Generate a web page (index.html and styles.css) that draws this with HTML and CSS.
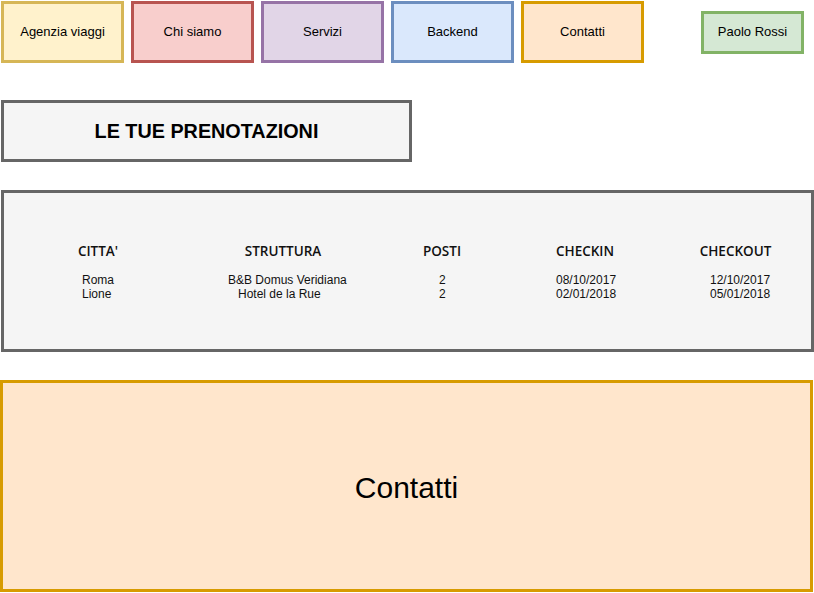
FILE: index.html
```html
<!DOCTYPE html>
<html lang="it">
<head>
<meta charset="utf-8">
<title>Le tue prenotazioni</title>
<link rel="stylesheet" href="styles.css">
</head>
<body>
<div class="page">
  <nav class="nav">
    <div class="tab tab-yellow">Agenzia viaggi</div>
    <div class="tab tab-red">Chi siamo</div>
    <div class="tab tab-purple">Servizi</div>
    <div class="tab tab-blue">Backend</div>
    <div class="tab tab-orange">Contatti</div>
    <div class="user">Paolo Rossi</div>
  </nav>

  <div class="heading">LE TUE PRENOTAZIONI</div>

  <section class="bookings">
    <div class="grid">
      <div class="th">CITTA'</div>
      <div class="th">STRUTTURA</div>
      <div class="th">POSTI</div>
      <div class="th">CHECKIN</div>
      <div class="th">CHECKOUT</div>

      <div class="td c1">Roma<br>Lione</div>
      <div class="td c2">B&amp;B Domus Veridiana<br>&nbsp;&nbsp;&nbsp;Hotel de la Rue</div>
      <div class="td c3">2<br>2</div>
      <div class="td c4">08/10/2017<br>02/01/2018</div>
      <div class="td c5">12/10/2017<br>05/01/2018</div>
    </div>
  </section>

  <section class="contacts">Contatti</section>
</div>
</body>
</html>
```

FILE: styles.css
```css
html, body {
  margin: 0;
  padding: 0;
  background: #ffffff;
}

body {
  font-family: "Liberation Sans", Arial, Helvetica, sans-serif;
  color: #000000;
}

.page {
  width: 814px;
  display: flex;
  flex-direction: column;
  padding-top: 1px;
}

.nav {
  display: flex;
  align-items: center;
  gap: 7px;
  padding-left: 1px;
  height: 62px;
}

.tab {
  box-sizing: border-box;
  width: 123px;
  height: 62px;
  border: 3px solid;
  display: flex;
  align-items: center;
  justify-content: center;
  padding-bottom: 1px;
  font-size: 13px;
  color: #000000;
}

.tab-yellow { background: #fff2cc; border-color: #d6b656; }
.tab-red    { background: #f8cecc; border-color: #b85450; }
.tab-purple { background: #e1d5e7; border-color: #9673a6; }
.tab-blue   { background: #dae8fc; border-color: #6c8ebf; }
.tab-orange { background: #ffe6cc; border-color: #d79b00; }

.user {
  box-sizing: border-box;
  margin-left: auto;
  margin-right: 10px;
  width: 103px;
  height: 43px;
  border: 3px solid #82b366;
  background: #d5e8d4;
  display: flex;
  align-items: center;
  justify-content: center;
  padding-bottom: 1px;
  font-size: 13px;
}

.heading {
  box-sizing: border-box;
  margin: 37px 0 0 1px;
  width: 411px;
  height: 62px;
  border: 3px solid #666666;
  background: #f5f5f5;
  display: flex;
  align-items: center;
  justify-content: center;
  padding-top: 1px;
  font-weight: bold;
  font-size: 19.8px;
}

.bookings {
  box-sizing: border-box;
  margin: 28px 0 0 1px;
  width: 813px;
  height: 162px;
  border: 3px solid #666666;
  background: #f5f5f5;
  padding-top: 48px;
}

.grid {
  display: grid;
  grid-template-columns: 188px 182px 136px 150px 1fr;
  row-gap: 12px;
}

.th {
  text-align: center;
  font-family: "Open Sans", "Liberation Sans", sans-serif;
  font-weight: 600;
  font-size: 13.5px;
  line-height: 20px;
  color: #111111;
}

.td {
  font-size: 12px;
  line-height: 14px;
  color: #111111;
}

.c1 { padding-left: 78px; }
.c2 { padding-left: 36px; }
.c3 { padding-left: 65px; }
.c4 { padding-left: 46px; }
.c5 { padding-left: 50px; }

.contacts {
  box-sizing: border-box;
  margin-top: 28px;
  width: 813px;
  height: 212px;
  border: 3px solid #d79b00;
  background: #ffe6cc;
  display: flex;
  align-items: center;
  justify-content: center;
  padding-top: 4px;
  font-size: 30px;
}
```
